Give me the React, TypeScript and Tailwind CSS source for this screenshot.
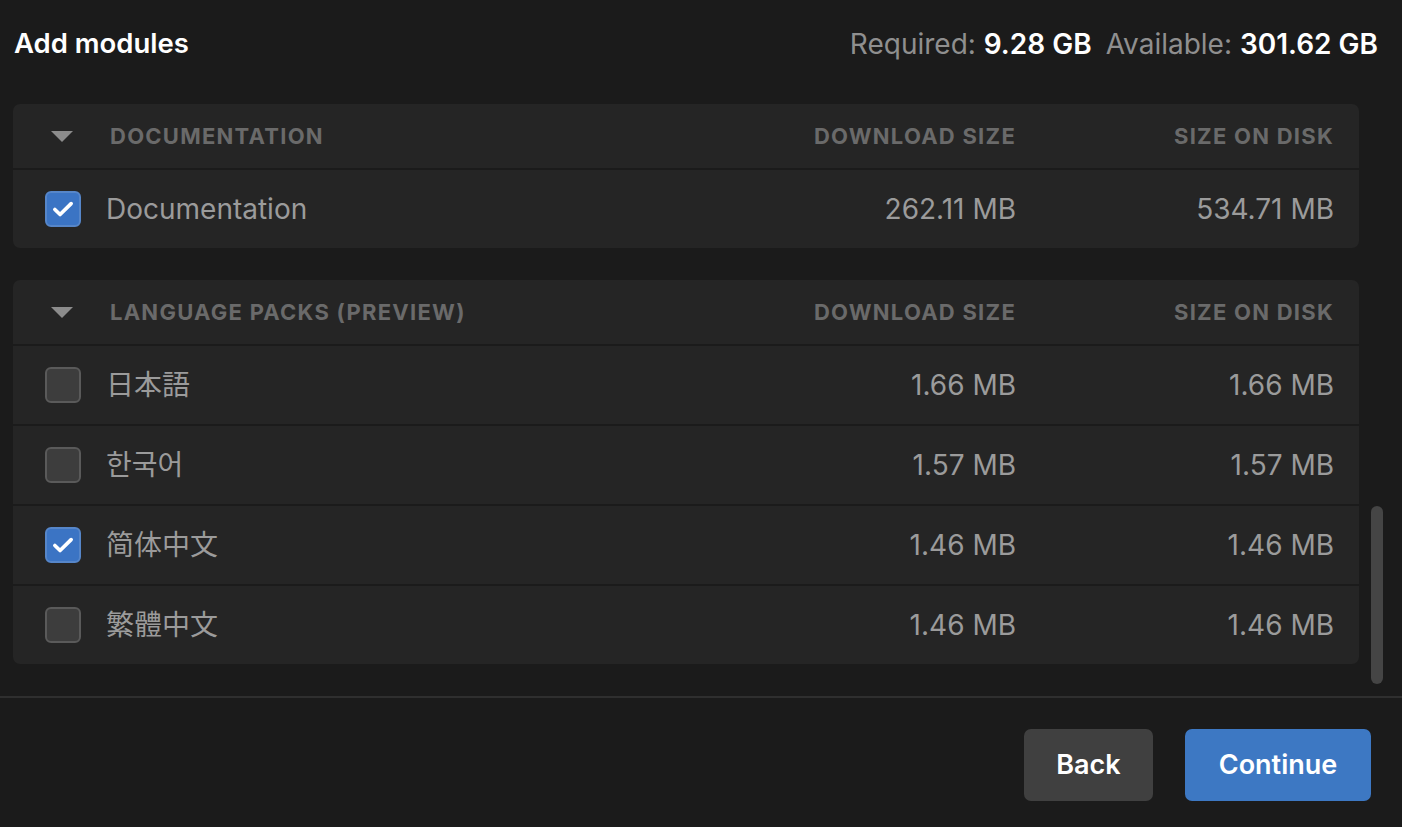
import React from 'react';

type Module = { name: string; download: string; disk: string; checked: boolean };

const sections: { title: string; items: Module[] }[] = [
  {
    title: 'Documentation',
    items: [{ name: 'Documentation', download: '262.11 MB', disk: '534.71 MB', checked: true }],
  },
  {
    title: 'Language Packs (Preview)',
    items: [
      { name: '日本語', download: '1.66 MB', disk: '1.66 MB', checked: false },
      { name: '한국어', download: '1.57 MB', disk: '1.57 MB', checked: false },
      { name: '简体中文', download: '1.46 MB', disk: '1.46 MB', checked: true },
      { name: '繁體中文', download: '1.46 MB', disk: '1.46 MB', checked: false },
    ],
  },
];

function Checkbox({ checked }: { checked: boolean }) {
  if (checked) {
    return (
      <div className="flex h-[36px] w-[36px] items-center justify-center rounded-[6px] border-2 border-[#5686c9] bg-[#3b74c4]">
        <svg width="26" height="26" viewBox="0 0 24 24" fill="none">
          <path d="M4.5 12.5l4.8 4.6L19.5 7" stroke="white" strokeWidth="3.4" strokeLinecap="round" strokeLinejoin="round" />
        </svg>
      </div>
    );
  }
  return <div className="h-[36px] w-[36px] rounded-[6px] border-2 border-[#5a5a5a] bg-[#3d3d3d]" />;
}

function Section({ title, items }: { title: string; items: Module[] }) {
  return (
    <div className="overflow-hidden rounded-[7px] bg-[#252525]">
      <div className="flex h-[64px] items-center pr-[25px] text-[22px] font-bold uppercase tracking-[1.25px] text-[#6a6a6a]">
        <div className="flex w-[97px] justify-center pl-[1px]">
          <svg width="22" height="11" viewBox="0 0 22 11">
            <path d="M0 0h22L11 11z" fill="#8c8c8c" />
          </svg>
        </div>
        <div className="flex-1">{title}</div>
        <div className="w-[300px] text-right">Download Size</div>
        <div className="w-[318px] text-right">Size on Disk</div>
      </div>
      {items.map((m) => (
        <div
          key={m.name}
          className="flex h-[80px] items-center border-t-2 border-[#1b1b1b] pr-[25px] text-[28px] text-[#9b9b9b]"
        >
          <div className="flex w-[93px] justify-center pl-[7px]">
            <Checkbox checked={m.checked} />
          </div>
          <div className="flex-1" style={{ fontFamily: 'Inter, "Noto Sans CJK JP", "Noto Sans CJK KR", sans-serif' }}>
            {m.name}
          </div>
          <div className="w-[300px] text-right">{m.download}</div>
          <div className="w-[318px] text-right">{m.disk}</div>
        </div>
      ))}
    </div>
  );
}

export default function App() {
  return (
    <div className="flex h-[827px] w-[1402px] flex-col bg-[#1b1b1b] font-['Inter',sans-serif] text-white">
      <header className="flex h-[88px] items-center justify-between pl-[14px] pr-[24px]">
        <h1 className="text-[27.5px] font-semibold">Add modules</h1>
        <div className="text-[28px] text-[#8f8f8f]">
          Required: <span className="font-semibold text-white">9.28 GB</span>
          <span className="ml-[14px]">Available: </span>
          <span className="font-semibold text-white">301.62 GB</span>
        </div>
      </header>

      <main className="flex h-[608px]">
        <div className="flex w-[1359px] flex-col gap-[32px] pl-[13px] pt-[16px]">
          {sections.map((s) => (
            <Section key={s.title} title={s.title} items={s.items} />
          ))}
        </div>
        <div className="ml-[12px] flex w-[12px] flex-col justify-end pb-[12px]">
          <div className="h-[178px] rounded-full bg-[#454545]" />
        </div>
      </main>

      <div className="h-[2px] bg-[#2f2f2f]" />

      <footer className="flex flex-1 items-start justify-end gap-[32px] pr-[31px] pt-[31px]">
        <button className="h-[72px] w-[129px] rounded-[7px] bg-[#404040] text-[27px] font-semibold text-white">
          Back
        </button>
        <button className="h-[72px] w-[186px] rounded-[7px] bg-[#3d78c3] text-[27px] font-semibold text-white">
          Continue
        </button>
      </footer>
    </div>
  );
}
